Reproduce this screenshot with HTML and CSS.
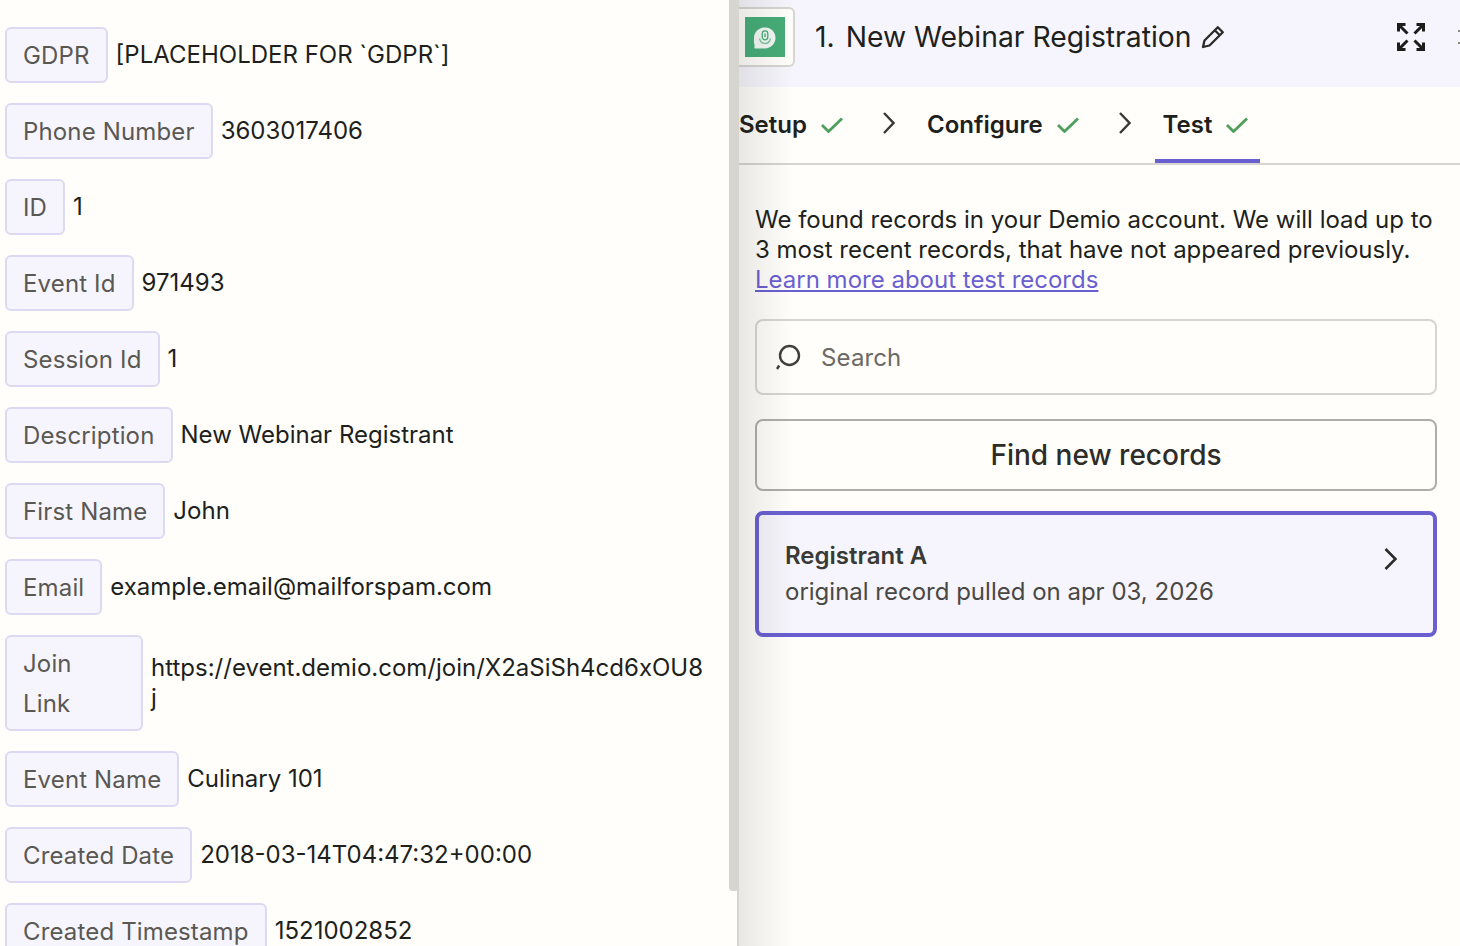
FILE: index.html
```html
<!DOCTYPE html>
<html lang="en">
<head>
<meta charset="utf-8">
<title>New Webinar Registration</title>
<link rel="stylesheet" href="styles.css">
</head>
<body>
<main class="page">
  <section class="left">
    <div class="fields">
      <div class="field"><span class="tag">GDPR</span><span class="value">[PLACEHOLDER FOR `GDPR`]</span></div>
      <div class="field"><span class="tag">Phone Number</span><span class="value">3603017406</span></div>
      <div class="field"><span class="tag">ID</span><span class="value">1</span></div>
      <div class="field"><span class="tag">Event Id</span><span class="value">971493</span></div>
      <div class="field"><span class="tag">Session Id</span><span class="value">1</span></div>
      <div class="field"><span class="tag">Description</span><span class="value">New Webinar Registrant</span></div>
      <div class="field"><span class="tag">First Name</span><span class="value">John</span></div>
      <div class="field"><span class="tag">Email</span><span class="value">example.email@mailforspam.com</span></div>
      <div class="field"><span class="tag tag-wrap">Join<br>Link</span><span class="value value-wrap">https://event.demio.com/join/X2aSiSh4cd6xOU8j</span></div>
      <div class="field"><span class="tag">Event Name</span><span class="value">Culinary 101</span></div>
      <div class="field"><span class="tag">Created Date</span><span class="value">2018-03-14T04:47:32+00:00</span></div>
      <div class="field"><span class="tag">Created Timestamp</span><span class="value">1521002852</span></div>
    </div>
  </section>
  <div class="scrollbar"></div>
  <section class="right">
    <header class="head">
      <div class="app-box">
        <div class="app-icon">
          <svg viewBox="0 0 40 40" width="40" height="40" aria-hidden="true">
            <path d="M20 10.500c6 0 10.500 4.500 10.500 10.300S26 31.500 20 31.500H10.200c-.6 0-.9-.5-.8-1 .3-1.500.2-2.500-.1-3.500-.6-1.800-.3-4-.3-6.200C9 15 14 10.500 20 10.500z" fill="#f2f8f4"/>
            <rect x="17.200" y="13.800" width="5.600" height="9" rx="2.800" fill="none" stroke="#45ad78" stroke-width="1.300"/>
            <rect x="19.300" y="16.500" width="1.400" height="3.500" fill="#45ad78"/>
            <path d="M14.500 21.500c.8 3.500 3 5 5.500 5s4.700-1.500 5.500-5" fill="none" stroke="#7ec49f" stroke-width="1.300"/>
          </svg>
        </div>
      </div>
      <h1 class="title"><span class="title-num">1.</span> New Webinar Registration</h1>
      <svg class="pencil" viewBox="0 0 24 24" width="24" height="24" aria-hidden="true"><path d="M2 22l1.500-6.500L16.800 2.200l5 5L8.500 20.500zM13.800 5.200l5 5" fill="none" stroke="#2b2a28" stroke-width="2.300" stroke-linejoin="round"/></svg>
      <svg class="expand" viewBox="0 0 28 28" width="28" height="28" aria-hidden="true">
        <path d="M1.500 8.500v-7h7M2 2l8.500 8.500M19.500 1.500h7v7M26 2l-8.500 8.500M1.500 19.500v7h7M2 26l8.500-8.500M26.500 19.500v7h-7M26 26l-8.500-8.500" fill="none" stroke="#1d1c1a" stroke-width="3"/>
      </svg>
      <span class="edge-mark"></span>
    </header>
    <nav class="tabs">
      <div class="tab"><span>Setup</span><svg class="check" viewBox="0 0 22 16" width="22" height="16" aria-hidden="true"><path d="M1 8l6.500 6.500L21 1.500" fill="none" stroke="#4d9f5b" stroke-width="2.800"/></svg></div>
      <svg class="chev" viewBox="0 0 12 22" width="12" height="22" aria-hidden="true"><path d="M1 1l9.500 10L1 21" fill="none" stroke="#3a3936" stroke-width="2.400"/></svg>
      <div class="tab"><span>Configure</span><svg class="check" viewBox="0 0 22 16" width="22" height="16" aria-hidden="true"><path d="M1 8l6.500 6.500L21 1.500" fill="none" stroke="#4d9f5b" stroke-width="2.800"/></svg></div>
      <svg class="chev" viewBox="0 0 12 22" width="12" height="22" aria-hidden="true"><path d="M1 1l9.500 10L1 21" fill="none" stroke="#3a3936" stroke-width="2.400"/></svg>
      <div class="tab tab-active"><span>Test</span><svg class="check" viewBox="0 0 22 16" width="22" height="16" aria-hidden="true"><path d="M1 8l6.500 6.500L21 1.500" fill="none" stroke="#4d9f5b" stroke-width="2.800"/></svg></div>
    </nav>
    <div class="content">
      <p class="intro">We found records in your Demio account. We will load up to 3 most recent records, that have not appeared previously. <a href="#">Learn more about test records</a></p>
      <div class="search">
        <svg viewBox="0 0 26 28" width="26" height="28" aria-hidden="true"><circle cx="14.500" cy="12.500" r="9.500" fill="none" stroke="#403f3c" stroke-width="2.400"/><path d="M2 26l2.200-3.500" fill="none" stroke="#403f3c" stroke-width="2.400"/></svg>
        <span>Search</span>
      </div>
      <button class="find" type="button">Find new records</button>
      <div class="record">
        <div class="record-text">
          <strong>Registrant A</strong>
          <span>original record pulled on apr 03, 2026</span>
        </div>
        <svg class="record-chev" viewBox="0 0 13 22" width="13" height="22" aria-hidden="true"><path d="M1.500 1l10 10-10 10" fill="none" stroke="#2b2a28" stroke-width="2.600"/></svg>
      </div>
    </div>
  </section>
</main>
</body>
</html>
```
FILE: styles.css
```css
* { box-sizing: border-box; }
html, body { margin: 0; height: 100%; overflow: hidden; }
body {
  background: #fffefb;
  color: #201f1c;
  font-family: Inter, "Noto Sans", sans-serif;
  font-size: 24px;
}
.page { position: relative; display: flex; width: 1460px; height: 946px; }

/* Left field list */
.left { width: 737px; height: 946px; overflow: hidden; flex: none; }
.fields { display: flex; flex-direction: column; gap: 20px; padding: 27px 0 0 5px; }
.field { display: flex; align-items: center; gap: 8px; flex: none; }
.tag {
  flex: none;
  padding: 7px 16px 5px;
  background: #f6f5fd;
  border: 2px solid #dcdaf3;
  border-radius: 6px;
  color: #5a5853;
  line-height: 40px;
  letter-spacing: .15px;
  white-space: nowrap;
}
.tag-wrap { width: 138px; }
.value { line-height: 30px; color: #201f1c; }
.value-wrap { width: 555px; word-break: break-all; }
.scrollbar {
  position: absolute; top: 0; left: 729px; z-index: 2;
  width: 10px; height: 891px;
  background: #d6d5d0;
  border-radius: 0 0 4px 4px;
}

/* Right panel */
.right {
  position: relative;
  flex: 1;
  min-width: 0;
  height: 946px;
  border-left: 2px solid #d6d5d0;
  overflow: hidden;
}
.right::after {
  content: "";
  position: absolute; top: 0; bottom: 0; left: 0;
  width: 55px;
  background: linear-gradient(90deg, rgba(40,40,30,.1), rgba(40,40,30,0));
  pointer-events: none;
}
.head {
  position: relative;
  display: flex; align-items: center;
  height: 87px;
  padding-bottom: 13px;
  background: #f6f5fd;
}
.app-box {
  flex: none;
  width: 56px; height: 60px;
  padding: 8px 8px 0 6px;
  background: #fffefb;
  border: 2px solid #d6d5d0;
  border-left: 0;
  border-radius: 0 6px 6px 0;
}
.app-icon { width: 40px; height: 40px; background: #45ad78; }
.app-icon svg { display: block; }
.title { margin: 0 0 0 20px; font-size: 28.300px; font-weight: 400; line-height: 40px; color: #201f1c; white-space: nowrap; }
.title-num { margin-right: 3px; }
.pencil { margin-left: 10px; flex: none; }
.expand { margin-left: auto; margin-right: 35px; flex: none; }
.edge-mark {
  position: absolute; top: 30px; right: 0;
  width: 2px; height: 14px;
  border-top: 2px solid #8a8985;
  border-bottom: 2px solid #8a8985;
}

.tabs {
  display: flex; align-items: center;
  height: 78px;
  border-bottom: 2px solid #d6d5d0;
}
.tab {
  position: relative;
  display: flex; align-items: center; gap: 14px;
  height: 76px;
  padding-bottom: 2px;
  font-weight: 600;
  color: #201f1c;
}
.check { margin-top: 2px; }
.tabs .chev { flex: none; margin: -4px 32px 0 40px; }
.tab-active { padding: 0 12px 2px 8px; margin-left: -8px; }
.tab-active::after {
  content: "";
  position: absolute; left: 0; right: 0; bottom: 0;
  height: 4px;
  background: #6a5fd1;
}

.content { padding: 40px 23px 0 16px; display: flex; flex-direction: column; }
.intro { margin: 0; line-height: 30px; }
.intro a { color: #6a5fd1; }
.search {
  display: flex; align-items: center; gap: 20px;
  height: 76px; margin-top: 24px; padding: 0 18px;
  border: 2px solid #d6d5d0; border-radius: 8px;
  color: #6b6964;
  letter-spacing: .13px;
}
.find {
  height: 72px; margin-top: 24px;
  background: transparent;
  border: 2px solid #aeada8; border-radius: 8px;
  font: 500 28px Inter, "Noto Sans", sans-serif;
  color: #2d2c29;
  padding-left: 26px;
}
.record {
  display: flex; align-items: center; justify-content: space-between;
  height: 126px; margin-top: 20px; padding: 0 36px 0 26px;
  background: #f6f5fd;
  border: 4px solid #6a5fd1; border-radius: 8px;
}
.record-text { display: flex; flex-direction: column; gap: 6px; line-height: 30px; }
.record-text strong { font-weight: 600; color: #3a3936; }
.record-text span { color: #4a4844; }
.record-chev { align-self: flex-start; margin-top: 33px; }
```
